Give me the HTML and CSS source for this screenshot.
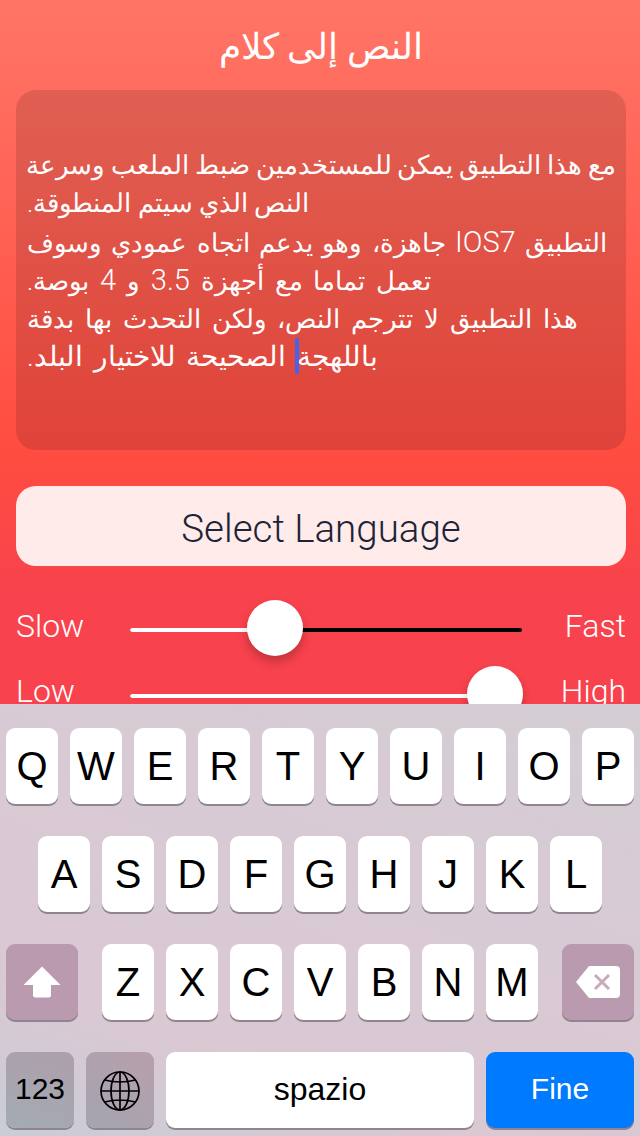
FILE: index.html
```html
<!DOCTYPE html>
<html lang="ar">
<head>
    <meta charset="UTF-8">
    <meta name="viewport" content="width=device-width, initial-scale=1.0">
    <title>النص إلى كلام</title>
    <link rel="stylesheet" href="styles.css">
</head>
<body>
    <div class="app">
        <h1 class="title">النص إلى كلام</h1>
        <div class="text-panel">
            <div class="line tight">مع هذا التطبيق يمكن للمستخدمين ضبط الملعب وسرعة</div>
            <div class="line">النص الذي سيتم المنطوقة.</div>
            <div class="line spaced">التطبيق <span class="latin">IOS7</span> جاهزة، وهو يدعم اتجاه عمودي وسوف</div>
            <div class="line wide">تعمل تماما مع أجهزة <span class="latin">3.5</span> و <span class="latin">4</span> بوصة.</div>
            <div class="line wide">هذا التطبيق لا تترجم النص، ولكن التحدث بها بدقة</div>
            <div class="line large">باللهجة<span class="caret"></span> الصحيحة للاختيار البلد.</div>
        </div>
        <button class="select-btn" lang="en">Select Language</button>
        <div class="slider-row" lang="en">
            <span class="slider-label">Slow</span>
            <div class="slider">
                <div class="slider-fill" style="width: 37%"></div>
                <div class="slider-thumb" style="left: 37%"></div>
            </div>
            <span class="slider-label end">Fast</span>
        </div>
        <div class="slider-row" lang="en">
            <span class="slider-label">Low</span>
            <div class="slider">
                <div class="slider-fill" style="width: 93%"></div>
                <div class="slider-thumb" style="left: 93%"></div>
            </div>
            <span class="slider-label end">High</span>
        </div>
    </div>

    <div class="keyboard" lang="en">
        <div class="key-row">
            <div class="key">Q</div><div class="key">W</div><div class="key">E</div><div class="key">R</div><div class="key">T</div>
            <div class="key">Y</div><div class="key">U</div><div class="key">I</div><div class="key">O</div><div class="key">P</div>
        </div>
        <div class="key-row">
            <div class="key">A</div><div class="key">S</div><div class="key">D</div><div class="key">F</div><div class="key">G</div>
            <div class="key">H</div><div class="key">J</div><div class="key">K</div><div class="key">L</div>
        </div>
        <div class="key-row">
            <div class="key action shift">
                <svg width="38" height="32" viewBox="0 0 38 32"><path d="M19 0.500 L37.500 19 H28 V29 Q28 31.500 25.500 31.500 H12.500 Q10 31.500 10 29 V19 H0.500 Z" fill="#fff"/></svg>
            </div>
            <div class="key">Z</div><div class="key">X</div><div class="key">C</div><div class="key">V</div><div class="key">B</div><div class="key">N</div><div class="key">M</div>
            <div class="key action delete">
                <svg width="44" height="32" viewBox="0 0 44 32">
                    <path d="M13 0 H40 Q44 0 44 4 V28 Q44 32 40 32 H13 L0 16 Z" fill="#fff"/>
                    <path d="M19 9 L33 23 M33 9 L19 23" stroke="#c9a9bc" stroke-width="3" fill="none"/>
                </svg>
            </div>
        </div>
        <div class="key-row bottom-row">
            <div class="key small num">123</div>
            <div class="key small globe">
                <svg width="40" height="40" viewBox="0 0 40 40" fill="none" stroke="#000" stroke-width="1.700">
                    <circle cx="20" cy="20" r="19"/>
                    <ellipse cx="20" cy="20" rx="9" ry="19"/>
                    <path d="M20 1 V39 M1 20 H39 M4.500 9 Q20 13 35.500 9 M4.500 31 Q20 27 35.500 31"/>
                </svg>
            </div>
            <div class="key space">spazio</div>
            <div class="key done">Fine</div>
        </div>
    </div>
</body>
</html>
```

FILE: styles.css
```css
* {
    box-sizing: border-box;
}
body {
    margin: 0;
    width: 640px;
    height: 1136px;
    overflow: hidden;
    font-family: Roboto, "DejaVu Sans", sans-serif;
    font-weight: 300;
}
.app {
    height: 704px;
    overflow: hidden;
    padding: 0 14px 0 16px;
    background: linear-gradient(#ff7566, #ff4c40 65%, #f8424d 85%);
    color: #fff;
}
.title {
    margin: 0;
    height: 90px;
    line-height: 94px;
    text-align: center;
    font-size: 36px;
    font-weight: 300;
}
.text-panel {
    height: 360px;
    padding: 56px 10px 0 11px;
    border-radius: 20px;
    background: rgba(0, 0, 0, 0.12);
}
.line {
    height: 38.4px;
    line-height: 38.4px;
    font-size: 26px;
    direction: rtl;
    text-align: left;
    white-space: nowrap;
}
.line.tight {
    word-spacing: -0.5px;
}
.line.spaced {
    word-spacing: 3px;
}
.line.wide {
    word-spacing: 4.5px;
}
.line.large {
    font-size: 28px;
    word-spacing: 4px;
}
.latin {
    font-size: 29px;
}
.caret {
    display: inline-block;
    width: 4px;
    height: 36px;
    margin: 0 -2px;
    vertical-align: -8px;
    background: #4a62e8;
}
.select-btn {
    display: block;
    width: 100%;
    height: 80px;
    margin-top: 36px;
    padding: 4px 0 0;
    border: 0;
    border-radius: 20px;
    background: #ffecea;
    color: #1d2438;
    font-family: inherit;
    font-weight: 300;
    font-size: 38.5px;
}
.slider-row {
    display: flex;
    align-items: center;
    height: 56px;
    margin-top: 34px;
}
.slider-row + .slider-row {
    margin-top: 10px;
}
.slider-label {
    width: 114px;
    padding-bottom: 4px;
    font-size: 32px;
}
.slider-row + .slider-row .slider-label {
    padding-bottom: 6px;
}
.slider-label.end {
    width: 104px;
    text-align: right;
}
.slider {
    position: relative;
    flex: 1;
    height: 4px;
    margin-top: 4px;
    border-radius: 2px;
    background: #000;
}
.slider-fill {
    height: 100%;
    border-radius: 2px;
    background: #fff;
}
.slider-thumb {
    position: absolute;
    top: -28px;
    width: 56px;
    height: 56px;
    margin-left: -28px;
    border-radius: 50%;
    background: #fff;
    box-shadow: 0 6px 10px rgba(0, 0, 0, 0.22);
}
.keyboard {
    display: flex;
    flex-direction: column;
    gap: 32px;
    height: 432px;
    padding: 24px 6px 0;
    background: linear-gradient(20deg, #c9cdd6 0%, #dac8d3 25%, #d8cad4 60%, #d4cdd4 100%);
    font-family: "Liberation Sans", Arial, sans-serif;
    font-weight: 400;
}
.key-row {
    display: flex;
    justify-content: center;
    gap: 12px;
}
.key {
    display: flex;
    align-items: center;
    justify-content: center;
    width: 52px;
    height: 76px;
    border-radius: 9px;
    background: #fff;
    box-shadow: 0 2px 0 #8f8590;
    color: #000;
    font-size: 40px;
}
.key.action {
    width: 72px;
    background: #ba9aae;
}
.shift {
    margin-right: 12px;
}
.delete {
    margin-left: 12px;
}
.bottom-row .key {
    padding-bottom: 2px;
}
.key.small {
    width: 68px;
}
.key.num {
    background: linear-gradient(200deg, #ad9fab, #a3abb3);
    font-size: 30px;
}
.key.globe {
    padding: 2px 0 0;
    background: linear-gradient(215deg, #b89fac, #a4a5b0);
}
.key.space {
    width: 308px;
    font-size: 32px;
}
.key.done {
    width: 148px;
    background: #007aff;
    color: #fff;
    font-size: 30px;
}
```
